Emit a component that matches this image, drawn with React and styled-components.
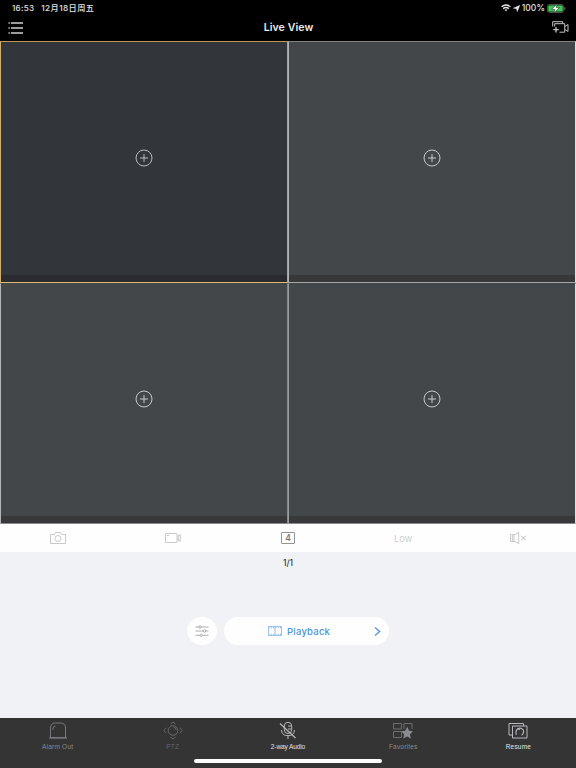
import React from "react";
import styled, { createGlobalStyle } from "styled-components";

const GlobalStyle = createGlobalStyle`
  * { box-sizing: border-box; }
  body { margin: 0; background: #f1f2f6; font-family: Inter, "Noto Sans CJK SC", sans-serif; }
  svg { display: block; flex: none; }
`;

const Screen = styled.div`
  width: 576px;
  height: 768px;
  display: flex;
  flex-direction: column;
  overflow: hidden;
  background: #f1f2f6;
`;

const StatusBar = styled.header`
  height: 16px;
  flex: none;
  background: #000;
  color: #e4e4e4;
  display: flex;
  align-items: center;
  justify-content: space-between;
  padding: 0 10px 0 12px;
  font-size: 8px;
  font-weight: 500;
  line-height: 16px;
`;

const StatusGroup = styled.div`
  display: flex;
  align-items: center;
  gap: ${(p) => p.$gap}px;
  height: 16px;
  white-space: nowrap;
`;

const StatusText = styled.span`
  font-size: ${(p) => p.$size || 8}px;
  letter-spacing: ${(p) => p.$track || 0}px;
`;

const NavBar = styled.nav`
  height: 25px;
  flex: none;
  background: #000;
  color: #ececec;
  display: grid;
  grid-template-columns: 60px 1fr 60px;
  align-items: center;
  padding: 0 7px 2px 8px;
`;

const NavTitle = styled.h1`
  margin: 0;
  text-align: center;
  font-size: 10.5px;
  line-height: 15px;
  font-weight: 600;
  letter-spacing: 0.1px;
`;

const NavEnd = styled.div`
  display: flex;
  justify-content: flex-end;
`;

const CameraGrid = styled.main`
  height: 483px;
  flex: none;
  display: grid;
  grid-template-columns: 288px 288px;
  grid-template-rows: 242px 241px;
`;

const Cell = styled.section`
  display: flex;
  flex-direction: column;
  background: ${(p) => (p.$active ? "#323539" : "#444749")};
  border: 1px solid ${(p) => (p.$active ? "#d2b05f" : "#b4b6b7")};
  border-top-color: ${(p) => (p.$active ? "#b99b58" : p.$lower ? "#444749" : "#85817b")};
  border-bottom-color: ${(p) => (p.$active ? "#e0bd6d" : p.$lower ? "#8b8c8d" : "#a4a6a7")};
  border-right-color: ${(p) => (p.$right ? "#dfe0e1" : p.$active ? "#b5a276" : "#85888a")};
  ${(p) => p.$right && `border-left-color: ${p.$lower ? "#9a9d9e" : "#b0b2b3"};`}
`;

const CellView = styled.div`
  flex: 1;
  display: flex;
  align-items: center;
  justify-content: center;
  padding-bottom: 2px;
`;

const CellFooter = styled.div`
  height: 7px;
  background: ${(p) => (p.$active ? "#292b30" : "#373839")};
`;

const Toolbar = styled.div`
  height: 28px;
  flex: none;
  background: #fefefe;
  display: grid;
  grid-template-columns: repeat(5, 1fr);
  align-items: center;
  justify-items: center;
  color: #c9c9cb;
`;

const Quality = styled.span`
  font-size: 9.3px;
  letter-spacing: 0.1px;
  color: #cfcfd1;
`;

const Split = styled.div`
  width: 14px;
  height: 12px;
  border: 1px solid #929397;
  border-radius: 1px;
  color: #77787c;
  font-size: 8.5px;
  font-weight: 600;
  line-height: 10px;
  text-align: center;
`;

const Panel = styled.div`
  flex: 1;
  display: flex;
  flex-direction: column;
  align-items: center;
`;

const PageCount = styled.div`
  margin-top: 6px;
  height: 11px;
  font-size: 8.5px;
  line-height: 11px;
  font-weight: 500;
  color: #343538;
`;

const Actions = styled.div`
  display: flex;
  gap: 7px;
  margin-top: 48px;
`;

const RoundButton = styled.button`
  width: 30px;
  height: 28px;
  border: 0;
  padding: 0;
  border-radius: 15px / 14px;
  background: #fefefe;
  display: flex;
  align-items: center;
  justify-content: center;
`;

const PlaybackButton = styled.button`
  width: 165px;
  height: 28px;
  border: 0;
  padding: 0 8px 0 44px;
  border-radius: 14px;
  background: #fefefe;
  color: #4c94e4;
  font: 500 9.5px/28px Inter, sans-serif;
  letter-spacing: 0.22px;
  display: flex;
  align-items: center;
`;

const PlaybackLabel = styled.span`
  margin-left: 5px;
  padding-top: 1px;
  flex: 1;
  text-align: left;
`;

const TabBar = styled.footer`
  height: 50px;
  flex: none;
  background: #343434;
  display: flex;
  flex-direction: column;
  align-items: center;
`;

const Tabs = styled.div`
  width: 576px;
  height: 41px;
  display: grid;
  grid-template-columns: repeat(5, 1fr);
`;

const Tab = styled.div`
  display: flex;
  flex-direction: column;
  align-items: center;
  padding-top: 3px;
  color: ${(p) => p.$color};
`;

const TabLabel = styled.span`
  margin-top: 1px;
  font: 400 6.5px/9px "Liberation Sans", sans-serif;
  letter-spacing: ${(p) => p.$track}px;
  color: ${(p) => p.$color};
  white-space: nowrap;
`;

const HomeIndicator = styled.div`
  width: 188px;
  height: 4px;
  border-radius: 2px;
  background: #fdfdfd;
`;

const line = { fill: "none", stroke: "currentColor", strokeWidth: 1 };

const MenuIcon = () => (
  <svg width="16" height="12" viewBox="0 0 16 12">
    <path d="M.5 1h1.3M3 1h12M.5 6h1.3M3 6h12M.5 11h1.3M3 11h12" stroke="#d0d0d0" strokeWidth="1.3" />
  </svg>
);

const AddCameraIcon = () => (
  <svg width="17" height="13" viewBox="0 0 17 13" {...line} strokeWidth="1" stroke="#c4c4c4">
    <path d="M.7 5.5V.7h10v2M2.7 5.5V2.7h10v8.5H7.5M13 5.5l3-2v7l-3-2" />
    <path d="M4 6v5.5M1.3 8.7h5.5" strokeWidth="1.3" />
  </svg>
);

const PlusIcon = ({ active }) => (
  <svg width="18" height="18" viewBox="0 0 18 18" {...line} stroke={active ? "#b9bbbd" : "#c8caca"}>
    <circle cx="9" cy="9" r="8" />
    <path d="M9 5v8M5 9h8" />
  </svg>
);

const WifiIcon = () => (
  <svg width="10" height="8" viewBox="0 0 10 8" fill="none" stroke="#e7e7e7" strokeWidth="1.35">
    <path d="M.5 2.8q4.5-3.5 9 0M2.1 4.6q2.9-2.2 5.8 0" />
    <path d="M3.5 5.8Q5 4.8 6.5 5.8L5 7.3Z" fill="#e7e7e7" stroke="none" />
  </svg>
);

const LocationIcon = () => (
  <svg width="7" height="7" viewBox="0 0 7 7"><path d="M6.9.2 4.3 6.8 3.4 3.8.1 3.2Z" fill="#e9e9e9" stroke="#e9e9e9" strokeWidth=".3" /></svg>
);

const BatteryIcon = () => (
  <svg width="19" height="9" viewBox="0 0 19 9">
    <rect x=".4" y=".5" width="16.2" height="8" rx="2.2" fill="#142b19" stroke="#69716a" strokeWidth=".7" />
    <rect x="1.3" y="1.5" width="14.4" height="6" rx="1.3" fill="#40c659" />
    <path d="M10 .1 4.5 5.3h3.2L7 8.9l5.6-5.3H9.3Z" fill="#fff" stroke="#173b20" strokeWidth=".6" />
    <path d="M17.8 3.3v2.4" stroke="#7b7b7b" />
  </svg>
);

const CameraIcon = () => (
  <svg width="16" height="12" viewBox="0 0 16 12" {...line}>
    <path d="M.5 2.5h4l1-2h5l1 2h4v9H.5Z" />
    <circle cx="8" cy="6.5" r="3" />
  </svg>
);

const VideoIcon = () => (
  <svg width="16" height="10" viewBox="0 0 16 10" {...line}>
    <rect x=".5" y=".5" width="11.5" height="9" rx=".6" />
    <path d="m12 3.5 3.3-2v7L12 6.5M13.3 2.8v4.4M2 2.5h2" />
  </svg>
);

const MutedIcon = () => (
  <svg width="17" height="12" viewBox="0 0 17 12" {...line}>
    <path d="M.5 2.5H4v7H.5ZM4 3l4.7-2.5v11L4 9M2.3 2.5v7" />
    <path d="M11.3 3.8l4.4 4.4M15.7 3.8l-4.4 4.4" stroke="#b9b9bb" />
  </svg>
);

const SlidersIcon = () => (
  <svg width="14" height="12" viewBox="0 0 14 12" fill="#fefefe" stroke="#a8a8aa" strokeWidth=".9">
    <path d="M.5 2h13M.5 6h13M.5 10.3h13" />
    <circle cx="5" cy="2" r="1.2" /><circle cx="9.5" cy="6" r="1.2" /><circle cx="6.2" cy="10.3" r="1.2" />
  </svg>
);

const FilmIcon = () => (
  <svg width="14" height="10" viewBox="0 0 14 10" fill="none" stroke="#8dbbee" strokeWidth=".9">
    <path d="M.5.5h13v9H.5ZM7 1v8" />
    <path d="M.5 1.6h13M.5 8.4h13" strokeDasharray="1 1.3" strokeWidth="1.2" />
  </svg>
);

const ChevronIcon = () => (
  <svg width="7" height="9" viewBox="0 0 7 9" fill="none" stroke="#4c94e4" strokeWidth="1.3"><path d="m1 .5 4.7 4L1 8.5" /></svg>
);

const AlarmIcon = () => (
  <svg width="20" height="20" viewBox="0 0 20 20" {...line}>
    <path d="M2.5 16V7q0-5 5-5h5q5 0 5 5v9M5 9V7.5Q5 5 7.5 5" />
    <path d="M1.2 16.8h17.6" strokeWidth="1.7" />
  </svg>
);

const PtzIcon = () => (
  <svg width="20" height="20" viewBox="0 0 20 20" {...line}>
    <circle cx="10" cy="9.5" r="4.8" />
    <path d="m7.5 3 2.5-2 2.5 2M7.5 16l2.5 2 2.5-2M3.3 7 .7 9.5l2.6 2.5M16.7 7l2.6 2.5-2.6 2.5M10.5 6.2q2.6.3 2.8 2.8" />
  </svg>
);

const MicOffIcon = () => (
  <svg width="20" height="20" viewBox="0 0 20 20" {...line}>
    <rect x="6.3" y="1.3" width="7.4" height="11.2" rx="3.7" />
    <path d="M3.5 9q.3 5.7 6.5 5.7T16.5 9M10 15v3M10 5h3M10 8h3" />
    <path d="M2 2.5 17.5 17" strokeWidth="1.2" />
  </svg>
);

const FavoritesIcon = () => (
  <svg width="20" height="20" viewBox="0 0 20 20" {...line}>
    <path d="M.5 2.5h8V8h-8ZM11 8V2.5h8V8M.5 10.5h8v6h-8Z" />
    <path d="m14.2 5.8 1.9 4 3.9.5-3 2.9.8 4.4-3.7-2.1-3.8 2.1.8-4.4-3-2.9 4.1-.5Z" fill="#8a8b91" stroke="none" />
  </svg>
);

const ResumeIcon = () => (
  <svg width="20" height="20" viewBox="0 0 20 20" {...line}>
    <path d="M4 14H1V2.5h14.5V5M4.5 5h14.5v12H4.5Z" />
    <path d="M8.3 13.8q-1-4 1.2-5.8Q12.5 5.9 15 8.6q1.6 3.2-1.4 5.7M8.2 9.6l1.5-2 2.2 1.3" strokeWidth="1.1" />
  </svg>
);

const tabs = [
  { label: "Alarm Out", Icon: AlarmIcon, icon: "#77787c", text: "#88888d", track: 0.24 },
  { label: "PTZ", Icon: PtzIcon, icon: "#66676a", text: "#656568", track: 0.3 },
  { label: "2-way Audio", Icon: MicOffIcon, icon: "#b8b9bf", text: "#e2e3ea", track: -0.1 },
  { label: "Favorites", Icon: FavoritesIcon, icon: "#6c6d70", text: "#88888d", track: 0.2 },
  { label: "Resume", Icon: ResumeIcon, icon: "#b8b9bf", text: "#e2e3ea", track: 0.2 },
];

export default function App() {
  return (
    <>
      <GlobalStyle />
      <Screen>
        <StatusBar>
          <StatusGroup $gap={7}>
            <StatusText $track={0.3}>16:53</StatusText>
            <StatusText $size={8.2} $track={0.42}>12月18日周五</StatusText>
          </StatusGroup>
          <StatusGroup $gap={2}>
            <WifiIcon />
            <LocationIcon />
            <StatusText $size={8.5} $track={0.1}>100%</StatusText>
            <BatteryIcon />
          </StatusGroup>
        </StatusBar>
        <NavBar>
          <MenuIcon />
          <NavTitle>Live View</NavTitle>
          <NavEnd><AddCameraIcon /></NavEnd>
        </NavBar>
        <CameraGrid>
          {[0, 1, 2, 3].map((i) => (
            <Cell key={i} $active={i === 0} $right={i % 2 === 1} $lower={i > 1}>
              <CellView><PlusIcon active={i === 0} /></CellView>
              <CellFooter $active={i === 0} />
            </Cell>
          ))}
        </CameraGrid>
        <Toolbar>
          <CameraIcon />
          <VideoIcon />
          <Split>4</Split>
          <Quality>Low</Quality>
          <MutedIcon />
        </Toolbar>
        <Panel>
          <PageCount>1/1</PageCount>
          <Actions>
            <RoundButton aria-label="Settings"><SlidersIcon /></RoundButton>
            <PlaybackButton>
              <FilmIcon />
              <PlaybackLabel>Playback</PlaybackLabel>
              <ChevronIcon />
            </PlaybackButton>
          </Actions>
        </Panel>
        <TabBar>
          <Tabs>
            {tabs.map(({ label, Icon, icon, text, track }) => (
              <Tab key={label} $color={icon}>
                <Icon />
                <TabLabel $color={text} $track={track}>{label}</TabLabel>
              </Tab>
            ))}
          </Tabs>
          <HomeIndicator />
        </TabBar>
      </Screen>
    </>
  );
}
